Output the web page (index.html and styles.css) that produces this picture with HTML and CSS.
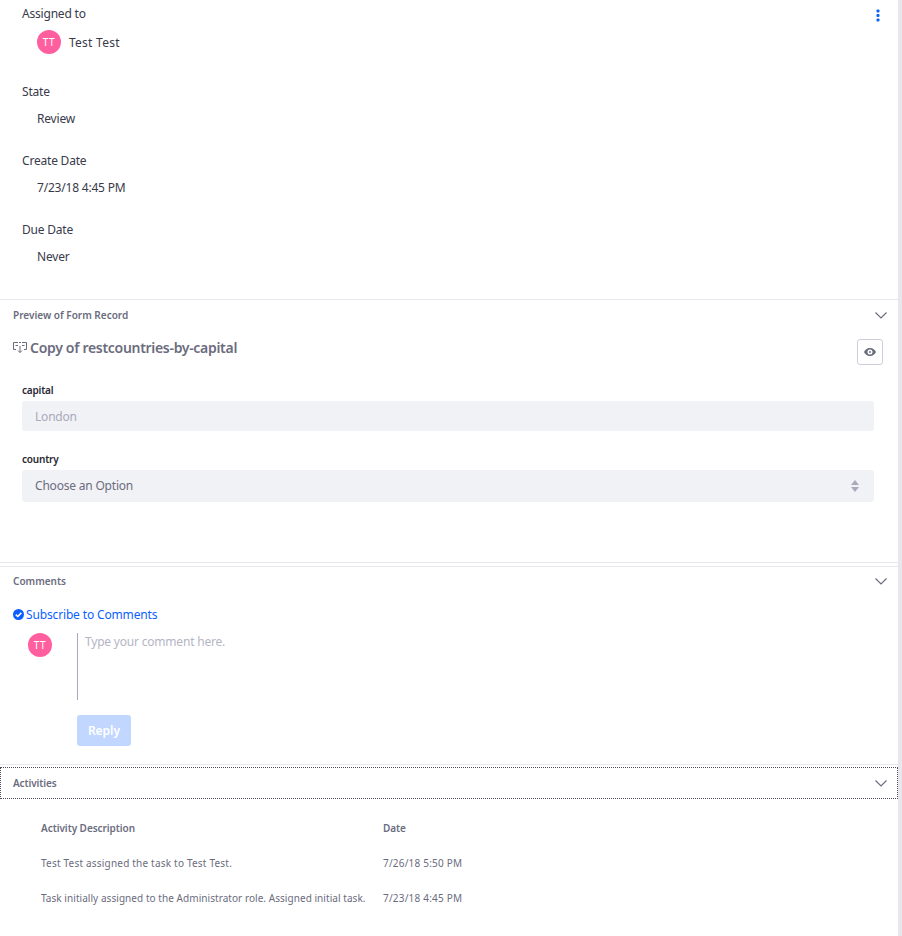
FILE: index.html
```html
<!DOCTYPE html>
<html lang="en">
<head>
<meta charset="utf-8">
<title>Task</title>
<link rel="stylesheet" href="styles.css">
</head>
<body>
<main class="page">
  <section class="details">
    <button class="kebab" aria-label="Actions"><svg width="4" height="14" viewBox="0 0 4 14"><rect x="0.5" y="0.5" width="3" height="3" rx="1" /><rect x="0.5" y="5" width="3" height="3" rx="1" /><rect x="0.5" y="9.5" width="3" height="3" rx="1" /></svg></button>
    <div class="field field-user">
      <div class="field-label">Assigned to</div>
      <div class="user"><span class="avatar">TT</span><span class="user-name">Test Test</span></div>
    </div>
    <div class="field">
      <div class="field-label">State</div>
      <div class="field-value">Review</div>
    </div>
    <div class="field">
      <div class="field-label">Create Date</div>
      <div class="field-value">7/23/18 4:45 PM</div>
    </div>
    <div class="field">
      <div class="field-label">Due Date</div>
      <div class="field-value">Never</div>
    </div>
  </section>

  <section class="panel panel-preview">
    <header class="panel-head">
      <span>Preview of Form Record</span>
      <svg class="chevron" width="12" height="7" viewBox="0 0 12 7"><path d="M0.5 0.5 L6 6 L11.5 0.5" /></svg>
    </header>
    <div class="record-head">
      <h2 class="record-title">
        <svg class="form-icon" width="14" height="13" viewBox="0 0 14 13"><path d="M5 1.500 H0.500 V8.500 H3 M9 1.500 H13.500 V8.500 H11 M6 1.500 H8 M7 5 V11.500 M5 9.500 L7 11.500 L9 9.500 M2.500 4.500 H5 M9 4.500 H11.500" /></svg>
        <span>Copy of restcountries-by-capital</span>
      </h2>
      <button class="eye-btn" aria-label="View"><svg width="12" height="8" viewBox="0 0 12 8"><path fill-rule="evenodd" d="M6 0 C9 0 11 2 12 4 C11 6 9 8 6 8 C3 8 1 6 0 4 C1 2 3 0 6 0 Z M6 1.500 A2.500 2.500 0 1 0 6 6.500 A2.500 2.500 0 1 0 6 1.500 Z M6 3 A1 1 0 1 1 6 5 A1 1 0 1 1 6 3 Z" /></svg></button>
    </div>
    <div class="form">
      <div class="form-group">
        <label class="form-label">capital</label>
        <div class="input input-text">London</div>
      </div>
      <div class="form-group">
        <label class="form-label">country</label>
        <div class="input input-select">
          <span class="select-text">Choose an Option</span>
          <svg width="8" height="12" viewBox="0 0 8 12"><path d="M4 0 L8 5 H0 Z M0 7 H8 L4 12 Z" /></svg>
        </div>
      </div>
    </div>
  </section>

  <section class="panel panel-comments">
    <header class="panel-head">
      <span>Comments</span>
      <svg class="chevron" width="12" height="7" viewBox="0 0 12 7"><path d="M0.5 0.5 L6 6 L11.5 0.5" /></svg>
    </header>
    <a class="subscribe" href="#">
      <svg width="11" height="11" viewBox="0 0 11 11"><circle cx="5.500" cy="5.500" r="5.500" fill="#0b5fff" /><path d="M2.800 5.600 L4.800 7.500 L8.300 3.900" fill="none" stroke="#fff" stroke-width="1.600" /></svg>
      <span>Subscribe to Comments</span>
    </a>
    <div class="comment-row">
      <span class="avatar">TT</span>
      <div class="comment-box">
        <div class="comment-input">Type your comment here.</div>
        <button class="reply">Reply</button>
      </div>
    </div>
  </section>

  <section class="panel-activities">
    <header class="panel-head panel-head-focus">
      <span>Activities</span>
      <svg class="chevron" width="12" height="7" viewBox="0 0 12 7"><path d="M0.5 0.5 L6 6 L11.5 0.5" /></svg>
    </header>
    <table class="activity">
      <thead>
        <tr><th>Activity Description</th><th>Date</th></tr>
      </thead>
      <tbody>
        <tr><td class="wide">Test Test assigned the task to Test Test.</td><td class="wide">7/26/18 5:50 PM</td></tr>
        <tr><td class="long">Task initially assigned to the Administrator role. Assigned initial task.</td><td class="wide">7/23/18 4:45 PM</td></tr>
      </tbody>
    </table>
  </section>
</main>
</body>
</html>
```
FILE: styles.css
```css
* { box-sizing: border-box; }
html, body { margin: 0; padding: 0; height: 100%; overflow: hidden; }
body {
  background: #fff;
  color: #272833;
  font-family: "Noto Sans", sans-serif;
  font-size: 12px;
}
.page {
  width: 902px;
  height: 936px;
  border-right: 4px solid #e7e7ed;
  overflow: hidden;
}
.details {
  position: relative;
  height: 299px;
  padding: 5px 0 0 22px;
  font-size: 12px;
  letter-spacing: -0.2px;
}
.kebab {
  position: absolute;
  top: 9px;
  left: 876px;
  padding: 0;
  border: 0;
  background: none;
  line-height: 0;
  fill: #0b5fff;
}
.field { height: 69px; }
.field-user { height: 78px; }
.field-label { line-height: 18px; height: 18px; color: #393a4a; }
.field-value { margin-top: 9px; margin-left: 15px; line-height: 18px; color: #393a4a; }
.user {
  display: flex;
  align-items: center;
  gap: 8px;
  margin: 7px 0 0 15px;
  color: #393a4a;
}
.user-name { letter-spacing: 0.25px; }
.avatar {
  display: flex;
  align-items: center;
  justify-content: center;
  flex: none;
  width: 24px;
  height: 24px;
  border-radius: 50%;
  background: #ff5f9e;
  color: #fff;
  font-size: 10px;
  letter-spacing: 0.5px;
}
.panel { border-top: 1px solid #e7e7ed; }
.panel-preview { height: 264px; border-bottom: 1px solid #e7e7ed; }
.panel-comments { height: 199px; border-bottom: 1px solid #e7e7ed; margin-top: 3px; }
.panel-head {
  display: flex;
  align-items: center;
  justify-content: space-between;
  height: 30px;
  padding: 0 11px 0 13px;
  font-size: 10px;
  font-weight: 600;
  color: #6b6c7e;
}
.chevron { fill: none; stroke: #6b6c7e; stroke-width: 1.200; }
.record-head {
  display: flex;
  justify-content: space-between;
  align-items: flex-start;
  padding: 9px 15px 0 13px;
  height: 50px;
}
.record-title {
  display: flex;
  align-items: center;
  gap: 3px;
  margin: 0;
  height: 16px;
  font-size: 14px;
  font-weight: 600;
  letter-spacing: -0.3px;
  color: #6b6c7e;
}
.form-icon { flex: none; fill: none; stroke: #6b6c7e; stroke-width: 1; }
.eye-btn {
  display: flex;
  align-items: center;
  justify-content: center;
  width: 26px;
  height: 26px;
  padding: 0;
  background: #fff;
  border: 1px solid #cdced9;
  border-radius: 3px;
  fill: #6b6c7e;
}
.form { padding: 0 24px 0 22px; }
.form-group { height: 69px; }
.form-label {
  display: block;
  height: 21px;
  line-height: 20px;
  font-size: 10px;
  font-weight: 600;
  letter-spacing: -0.2px;
  color: #272833;
}
.input {
  display: flex;
  align-items: center;
  justify-content: space-between;
  padding: 0 15px 0 13px;
  background: #f1f2f5;
  border-radius: 3px;
  font-size: 12px;
  letter-spacing: -0.2px;
}
.input-text { height: 30px; color: #a7a9bc; }
.input-select { height: 32px; color: #6b6c7e; fill: #a7a9bc; }
.select-text { margin-bottom: 2px; }
.panel-comments .panel-head { height: 28px; }
.subscribe {
  display: flex;
  align-items: center;
  gap: 2px;
  margin: 10px 0 0 13px;
  height: 18px;
  color: #0b5fff;
  text-decoration: none;
  font-size: 12px;
  letter-spacing: -0.15px;
}
.comment-row {
  display: flex;
  align-items: flex-start;
  margin: 10px 0 0 28px;
  gap: 25px;
}
.comment-box { width: 800px; }
.comment-input {
  height: 67px;
  border-left: 1px solid #a7a9bc;
  padding-left: 7px;
  line-height: 18px;
  color: #b3b5c5;
  font-size: 12px;
  letter-spacing: -0.2px;
}
.reply {
  display: block;
  width: 54px;
  height: 31px;
  margin-top: 15px;
  padding: 0;
  border: 0;
  border-radius: 3px;
  background: #c1d7ff;
  color: #fff;
  font-family: inherit;
  font-size: 12px;
  font-weight: 600;
}
.panel-activities { margin-top: 2px; }
.panel-head-focus {
  height: 32px;
  border: 1px dotted #4a4b5c;
  padding: 0 10px 0 12px;
  letter-spacing: -0.1px;
}
.activity {
  border-collapse: collapse;
  margin: 11px 0 0 41px;
  font-size: 10px;
  color: #6b6c7e;
  table-layout: fixed;
  width: 440px;
}
.activity th {
  height: 35px;
  padding: 0;
  text-align: left;
  font-weight: 600;
  letter-spacing: -0.05px;
}
.activity th:first-child { width: 342px; }
.activity td { height: 35px; padding: 0; white-space: nowrap; }
.activity .wide { letter-spacing: 0.2px; }
.activity .long { letter-spacing: 0.055px; }
```
